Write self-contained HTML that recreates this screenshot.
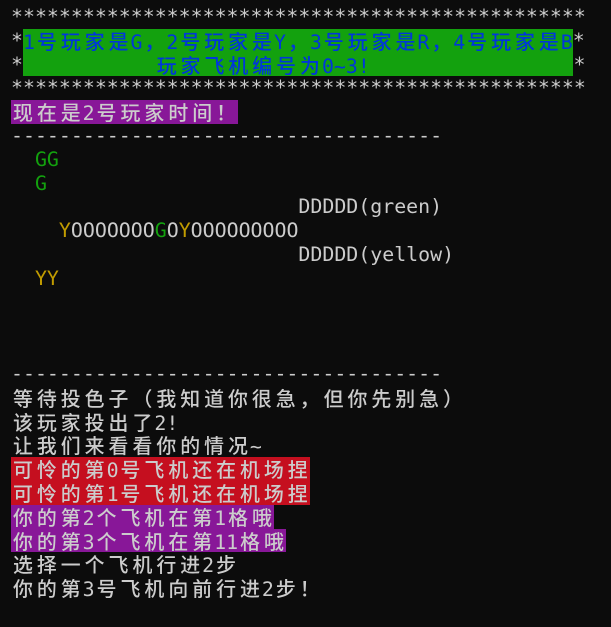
<!DOCTYPE html>
<html><head><meta charset="utf-8"><style>
html,body{margin:0;padding:0;background:#0c0c0c;width:611px;height:627px;overflow:hidden}
#t{position:absolute;left:11px;top:5px;font-family:"DejaVu Sans Mono","Noto Sans CJK SC",monospace;font-size:19.9px;color:#cccccc}
.l{height:23.8px;line-height:23.8px;white-space:pre}
i{font-style:normal;letter-spacing:4px;padding-left:2px;margin-right:-2px;font-family:"Noto Sans CJK SC",sans-serif;font-weight:500}
.g,.p,.r{display:inline-block;height:23.8px;vertical-align:top}
.g{background:#13a10e;color:#0037da}
.p{background:#881798}
.r{background:#c50f1f}
.gt{color:#13a10e}.yt{color:#c19c00}
</style></head><body><div id="t"><div class="l">************************************************</div><div class="l">*<span class="g">1<i>号玩家是</i>G<i>，</i>2<i>号玩家是</i>Y<i>，</i>3<i>号玩家是</i>R<i>，</i>4<i>号玩家是</i>B</span>*</div><div class="l">*<span class="g">           <i>玩家飞机编号为</i>0~3!                 </span>*</div><div class="l">************************************************</div><div class="l"><span class="p"><i>现在是</i>2<i>号玩家时间！</i></span></div><div class="l">------------------------------------</div><div class="l">  <span class="gt">GG</span></div><div class="l">  <span class="gt">G</span></div><div class="l">                        DDDDD(green)</div><div class="l">    <span class="yt">Y</span>OOOOOOO<span class="gt">G</span>O<span class="yt">Y</span>OOOOOOOOO</div><div class="l">                        DDDDD(yellow)</div><div class="l">  <span class="yt">YY</span></div><div class="l"> </div><div class="l"> </div><div class="l"> </div><div class="l">------------------------------------</div><div class="l"><i>等待投色子（我知道你很急，但你先别急）</i></div><div class="l"><i>该玩家投出了</i>2!</div><div class="l"><i>让我们来看看你的情况</i>~</div><div class="l"><span class="r"><i>可怜的第</i>0<i>号飞机还在机场捏</i></span></div><div class="l"><span class="r"><i>可怜的第</i>1<i>号飞机还在机场捏</i></span></div><div class="l"><span class="p"><i>你的第</i>2<i>个飞机在第</i>1<i>格哦</i></span></div><div class="l"><span class="p"><i>你的第</i>3<i>个飞机在第</i>11<i>格哦</i></span></div><div class="l"><i>选择一个飞机行进</i>2<i>步</i></div><div class="l"><i>你的第</i>3<i>号飞机向前行进</i>2<i>步！</i></div></div></body></html>
